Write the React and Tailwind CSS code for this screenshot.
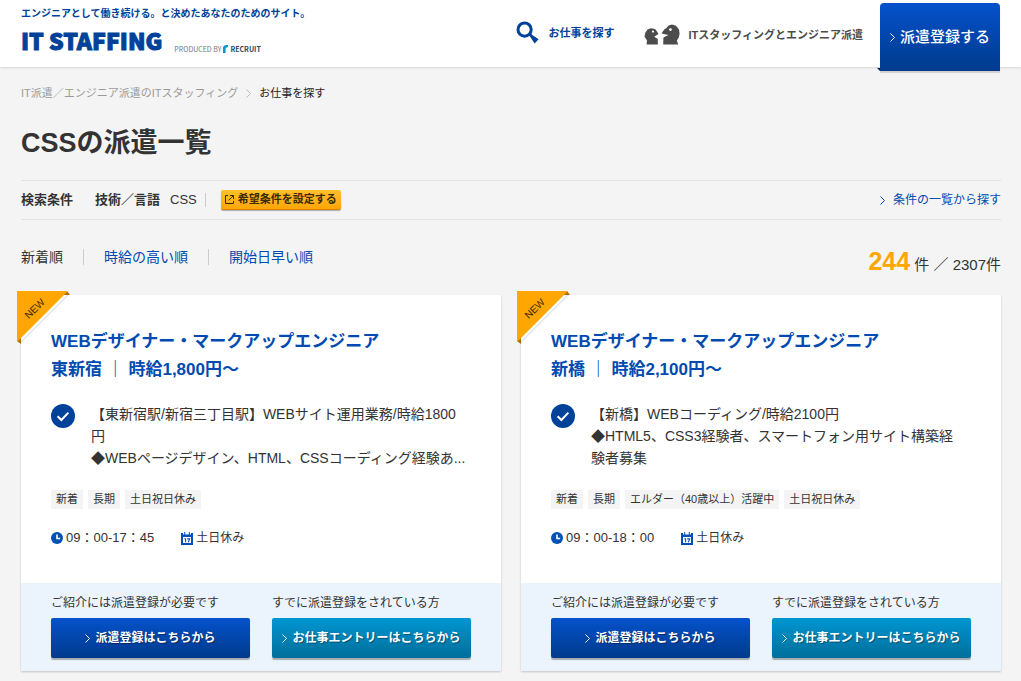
import React, { useState } from 'react'

const jobs = [
  {
    id: 1,
    title: 'WEBデザイナー・マークアップエンジニア',
    place: '東新宿 ｜ 時給1,800円～',
    lines: [
      '【東新宿駅/新宿三丁目駅】WEBサイト運用業務/時給1800',
      '円',
      '◆WEBページデザイン、HTML、CSSコーディング経験あ...',
    ],
    tags: ['新着', '長期', '土日祝日休み'],
    time: '09：00-17：45',
    holiday: '土日休み',
  },
  {
    id: 2,
    title: 'WEBデザイナー・マークアップエンジニア',
    place: '新橋 ｜ 時給2,100円～',
    lines: [
      '【新橋】WEBコーディング/時給2100円',
      '◆HTML5、CSS3経験者、スマートフォン用サイト構築経',
      '験者募集',
    ],
    tags: ['新着', '長期', 'エルダー（40歳以上）活躍中', '土日祝日休み'],
    time: '09：00-18：00',
    holiday: '土日休み',
  },
]

const sorts = ['新着順', '時給の高い順', '開始日早い順']

const Chevron = ({ className }) => (
  <svg viewBox="0 0 5 9" className={`h-[9px] w-[5px] shrink-0 ${className}`} fill="none" stroke="currentColor">
    <path d="M0.5 0.5 L4.5 4.5 L0.5 8.5" />
  </svg>
)

const SearchIcon = () => (
  <svg viewBox="0 0 24 24" className="h-6 w-6 shrink-0">
    <circle cx="8.6" cy="8.6" r="6.6" fill="none" stroke="#00429a" strokeWidth="3" />
    <path d="M12.6 13.8 L14.4 12 L17 14.4 L22.6 18.2 L18.6 22.4 L15 17 Z" fill="#00429a" />
  </svg>
)

const PeopleIcon = () => (
  <svg viewBox="0 0 36 21" className="h-[21px] w-9 shrink-0">
    <path d="M2.6 20.5 L3 16.5 L0.5 12.5 L1.2 9 L3.5 5.5 L7 4.2 L11 5 L13 7.6 L14.5 10 L10.2 12.8 L13.8 15 L13.8 20.5 Z" fill="#4c4c4c" />
    <path d="M19.2 20.5 L19.4 13.4 L24.5 11 L17.5 9.4 L20.2 5.4 L22.2 4.2 L24.6 1.4 L28 0.4 L32 1.8 L35 5.6 L35.6 9.6 L34.8 13.4 L32.8 16.6 L34.2 20.5 Z" fill="#4c4c4c" />
    <circle cx="9" cy="7.6" r="1.1" fill="#fff" />
    <circle cx="26.4" cy="5.6" r="1.4" fill="#fff" />
  </svg>
)

const RecruitMark = () => (
  <svg viewBox="0 0 5 8" className="h-2 w-[5px]">
    <path d="M0 8 V2.5 Q0.4 0 3 0 H5 V2.2 Q2.6 1.8 2.6 4 V8 Z" fill="#0a9bc9" />
  </svg>
)

const ClockIcon = () => (
  <svg viewBox="0 0 12 12" className="h-3 w-3 shrink-0">
    <circle cx="6" cy="6" r="6" fill="#0050b8" />
    <path d="M6 2.5 V6.5 H9.2" fill="none" stroke="#fff" strokeWidth="1.6" />
  </svg>
)

const CalendarIcon = () => (
  <svg viewBox="0 0 12 13" className="h-[13px] w-3 shrink-0">
    <path d="M0 1 H2 V2.5 H3.2 V0 H4.2 V2.5 H7.8 V0 H8.8 V2.5 H10 V1 H12 V13 H0 Z" fill="#0050b8" />
    <path d="M2 5 H10 V11 H2 Z" fill="#fff" />
    <path d="M3.3 6.8 H4.6 V10.2 M6.2 6.9 H8.7 L7.3 10.2" fill="none" stroke="#0050b8" strokeWidth="1.1" />
  </svg>
)

const CheckIcon = () => (
  <svg viewBox="0 0 24 24" className="h-6 w-6 shrink-0">
    <circle cx="12" cy="12" r="12" fill="#00429a" />
    <path d="M6.6 12.2 L10.4 16 L17.4 8.6" fill="none" stroke="#fff" strokeWidth="2" />
  </svg>
)

const ExternalIcon = () => (
  <svg viewBox="0 0 9 9" className="h-[9px] w-[9px] shrink-0" fill="none" stroke="#3a2a00">
    <path d="M3 0.5 H0.5 V8.5 H8.5 V6 M5 0.5 H8.5 V4 M8.5 0.5 L3.8 5.2" />
  </svg>
)

const NewRibbon = () => (
  <div className="absolute -left-1 -top-1 h-[53px] w-[53px]">
    <svg viewBox="0 0 53 53" className="h-full w-full">
      <path d="M50 4 H52 L4 52 V50 Z" fill="#e6e6e6" />
      <path d="M50 0 L53 4 H46 Z M0 50 L4 53 V46 Z" fill="#b36b00" />
      <path d="M0 0 H51 L0 51 Z" fill="#ffa600" />
    </svg>
    <span className="absolute left-0 top-3 w-9 -rotate-45 text-center text-[10px] leading-3 text-[#3a2a00]">NEW</span>
  </div>
)

const Header = () => (
  <header className="h-[67px] bg-white shadow-[0_1px_2px_rgba(0,0,0,0.12)]">
    <div className="flex h-full items-start justify-between px-[21px]">
      <div className="pt-2">
        <p className="whitespace-nowrap text-[10px] font-bold leading-3 text-[#00429a]">
          エンジニアとして働き続ける。と決めたあなたのためのサイト。
        </p>
        <div className="flex items-end gap-3 pt-1">
          <a href="#" className="whitespace-nowrap font-['Noto_Sans_CJK_JP',sans-serif] text-[23px] font-black leading-8 text-[#00429a] [-webkit-text-stroke:1px_#00429a]">
            IT STAFFING
          </a>
          <p className="flex items-center gap-[2px] whitespace-nowrap pb-[2px] font-['Noto_Sans_CJK_JP',sans-serif] text-[7px] leading-[10px] text-[#777]">
            PRODUCED BY
            <RecruitMark />
            <span className="font-bold text-[#2b4a5a]">RECRUIT</span>
          </p>
        </div>
      </div>
      <nav className="flex items-start">
        <a href="#" className="mt-[21px] flex items-center gap-2 whitespace-nowrap text-[11px] font-bold leading-6 text-[#00429a]">
          <SearchIcon />
          お仕事を探す
        </a>
        <a href="#" className="ml-[30px] mt-6 flex items-center gap-2 whitespace-nowrap text-[11px] font-bold leading-5 text-[#4c4c4c]">
          <PeopleIcon />
          ITスタッフィングとエンジニア派遣
        </a>
        <a
          href="#"
          className="relative ml-[17px] mt-[3px] flex h-[68px] w-[120px] items-center justify-center gap-[5px] whitespace-nowrap rounded-t bg-linear-to-b from-[#0552cc] to-[#003a8c] text-[15px] font-medium text-white shadow-[0_2px_1px_rgba(0,0,0,0.15)]"
        >
          <svg viewBox="0 0 3 3" className="absolute -left-[3px] bottom-0 h-[3px] w-[3px]">
            <path d="M0 0 H3 V3 Z" fill="#001f4d" />
          </svg>
          <Chevron className="text-white" />
          派遣登録する
        </a>
      </nav>
    </div>
  </header>
)

const JobCard = ({ job }) => (
  <article className="relative flex flex-col bg-white shadow-[0_1px_2px_rgba(0,0,0,0.2)]">
    <NewRibbon />
    <div className="px-[30px] pb-[35px] pt-[33px]">
      <h2 className="text-[17px] font-bold leading-7">
        <a href="#" className="text-[#004bb1]">
          {job.title}
          <br />
          {job.place}
        </a>
      </h2>
      <div className="flex gap-4 pt-5">
        <CheckIcon />
        <p className="-mt-[1px] text-sm leading-[22px]">
          {job.lines.map((line) => (
            <span key={line} className="block whitespace-nowrap">{line}</span>
          ))}
        </p>
      </div>
      <ul className="flex gap-[5px] pt-[21px]">
        {job.tags.map((tag) => (
          <li key={tag} className="whitespace-nowrap bg-[#f4f4f4] px-[5px] text-[11px] leading-[19px]">{tag}</li>
        ))}
      </ul>
      <div className="flex items-center gap-[27px] pt-[19px] leading-5">
        <span className="flex items-center gap-[3px] text-[13px]">
          <ClockIcon />
          {job.time}
        </span>
        <span className="flex items-center gap-[3px] text-xs">
          <CalendarIcon />
          {job.holiday}
        </span>
      </div>
    </div>
    <div className="mt-auto grid grid-cols-2 gap-[22px] bg-[#ebf4fc] px-[30px] pb-[13px] pt-[10px] text-xs">
      <div>
        <p className="whitespace-nowrap leading-5">ご紹介には派遣登録が必要です</p>
        <a
          href="#"
          className="mt-[5px] flex h-10 items-center justify-center gap-[5px] whitespace-nowrap rounded-[2px] bg-linear-to-b from-[#0552cc] to-[#003a8c] font-bold text-white shadow-[0_2px_1px_rgba(0,0,0,0.3)] text-shadow-[1px_1px_1px_rgba(0,0,0,0.4)]"
        >
          <Chevron className="text-white" />
          派遣登録はこちらから
        </a>
      </div>
      <div>
        <p className="whitespace-nowrap leading-5">すでに派遣登録をされている方</p>
        <a
          href="#"
          className="mt-[5px] flex h-10 items-center justify-center gap-[5px] whitespace-nowrap rounded-[2px] bg-linear-to-b from-[#0096d2] to-[#006f9b] font-bold text-white shadow-[0_2px_1px_rgba(0,0,0,0.3)] text-shadow-[1px_1px_1px_rgba(0,0,0,0.4)]"
        >
          <Chevron className="text-white" />
          お仕事エントリーはこちらから
        </a>
      </div>
    </div>
  </article>
)

export default function App() {
  const [sort, setSort] = useState(sorts[0])

  return (
    <div lang="ja" className="min-h-screen bg-[#f4f4f4] font-['Liberation_Sans','Noto_Sans_CJK_JP',sans-serif] text-[#333]">
      <Header />
      <main className="pb-[10px] pl-[21px] pr-5">
        <nav className="flex items-center pt-4 text-[11px] leading-5">
          <a href="#" className="text-[#999]">IT派遣／エンジニア派遣のITスタッフィング</a>
          <Chevron className="mx-2 text-[#bbb]" />
          <span className="text-[#222]">お仕事を探す</span>
        </nav>
        <h1 className="pt-5 text-[27px] font-bold leading-10">CSSの派遣一覧</h1>

        <div className="mt-[17px] flex h-10 items-center border-y border-[#e2e2e2] text-[13px]">
          <strong>検索条件</strong>
          <strong className="ml-[22px]">技術／言語</strong>
          <span className="ml-[10px]">CSS</span>
          <span className="ml-2 h-[14px] w-px bg-[#ccc]" />
          <button
            type="button"
            className="ml-[15px] flex h-5 w-[120px] cursor-pointer items-center justify-center gap-1 whitespace-nowrap rounded-[2px] border-b border-[#d98200] bg-linear-to-b from-[#ffbf2b] to-[#ffa600] text-[11px] font-bold text-[#3a2a00] shadow-[0_1px_1px_rgba(0,0,0,0.3)]"
          >
            <ExternalIcon />
            希望条件を設定する
          </button>
          <a href="#" className="ml-auto flex items-center gap-2 text-xs text-[#004bb1]">
            <Chevron className="" />
            条件の一覧から探す
          </a>
        </div>

        <div className="flex items-start justify-between pt-[25px]">
          <div className="mt-1 flex divide-x divide-[#ccc] text-sm">
            {sorts.map((s) => (
              <button
                key={s}
                type="button"
                onClick={() => setSort(s)}
                className={`cursor-pointer px-5 leading-4 first:pl-0 ${s === sort ? 'text-[#333]' : 'text-[#004bb1]'}`}
              >
                {s}
              </button>
            ))}
          </div>
          <p className="text-[15px] leading-8">
            <strong className="text-[25px] text-[#ffa600]">244</strong> 件 ／ 2307件
          </p>
        </div>

        <div className="mt-[14px] grid grid-cols-2 gap-5">
          {jobs.map((job) => (
            <JobCard key={job.id} job={job} />
          ))}
        </div>
      </main>
    </div>
  )
}
